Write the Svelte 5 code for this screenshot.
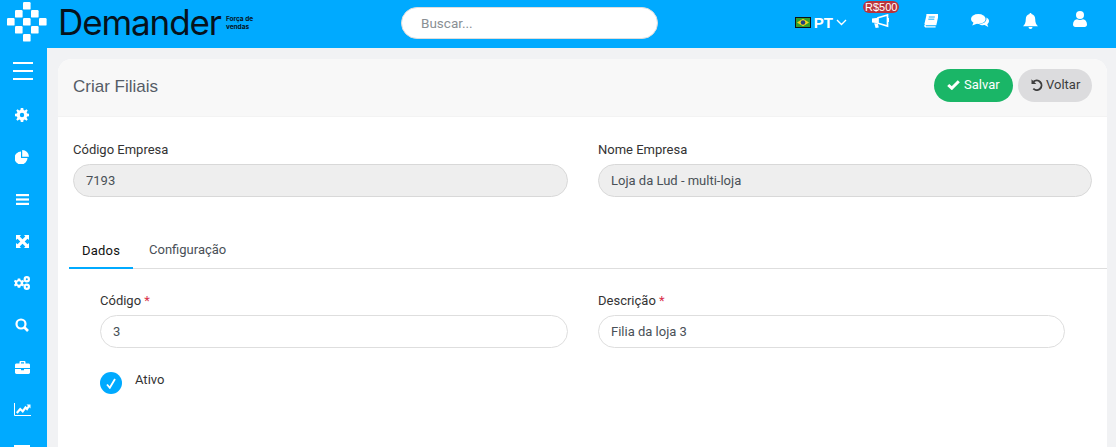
<script>
	let tab = 'Dados';
	const tabs = ['Dados', 'Configuração'];
	// diamond logo squares, col/row on an 8px grid
	const squares = [[2, 0], [1, 1], [3, 1], [0, 2], [2, 2], [4, 2], [1, 3], [3, 3], [2, 4]];
</script>

<div class="app">
	<header class="topbar">
		<div class="brand">
			<svg class="mark" viewBox="0 0 40 40" width="40" height="40" fill="#fff">
				{#each squares as [c, r]}
					<rect x={c * 8} y={r * 8} width="7.6" height="7.6" rx="1.2" />
				{/each}
			</svg>
			<span class="word">Demander</span>
			<span class="tag">Força de<br />vendas</span>
		</div>
		<div class="search"><input placeholder="Buscar..." /></div>
		<nav class="tools">
			<span class="lang">
				<svg width="16" height="11" viewBox="0 0 16 11"><rect width="16" height="11" fill="#111" /><rect x="1" y="1" width="14" height="9" fill="#2f9e2f" /><path d="M8 1.800 14 5.500 8 9.200 2 5.500z" fill="#f2d21b" /><circle cx="8" cy="5.500" r="2.300" fill="#24407f" /></svg>
				<b>PT</b>
				<svg width="11" height="7" viewBox="0 0 11 7" fill="none" stroke="#fff" stroke-width="1.400"><path d="M1 1l4.500 4.500L10 1" /></svg>
			</span>
			<span class="tool">
				<i class="badge">R$500</i>
				<svg width="17" height="14" viewBox="0 0 17 14"><path d="M0 4.500 6 3.800v5.400L0 8.500zM2.200 9.300l3.600.3 1 4-3.200.4z" fill="#fff" /><path d="M6 3.800 15.500 1v11L6 9.200z" fill="none" stroke="#fff" stroke-width="1.700" /><path d="M15 4h2v4h-2z" fill="#fff" /></svg>
			</span>
			<span class="tool">
				<svg width="15" height="14" viewBox="0 0 15 14"><path d="M3.500.5H15l-2.200 10H3.200c-1.600 0-1.800 2.300 0 2.300h9.400" fill="none" stroke="#fff" stroke-width="1.300" /><path d="M3.600.5H15l-2.200 9.500H1.400z" fill="#fff" /><path d="M5.800 3h6M5.300 5.200h6" stroke="#00aaff" stroke-width=".9" /></svg>
			</span>
			<span class="tool">
				<svg width="18" height="14" viewBox="0 0 18 14" fill="#fff"><ellipse cx="7.300" cy="5" rx="7.300" ry="5" /><path d="M2.800 8 1.200 11.500 6.500 9.500z" /><path d="M15.400 3.400C17 4.200 18 5.500 18 7c0 1.300-.7 2.400-1.700 3.200l1 2.800-3.700-1.900c-2 .4-4.200 0-5.600-1.200 3.800.1 8.200-2 7.400-6.500z" /></svg>
			</span>
			<span class="tool">
				<svg width="15" height="16" viewBox="0 0 15 16" fill="#fff"><path d="M7.500 0c.7 0 1 .5 1 1.100 2.300.5 3.700 2.400 3.700 4.900 0 4 1.100 5.700 2.800 7.200H0C1.700 11.700 2.800 10 2.800 6c0-2.500 1.400-4.400 3.700-4.900C6.500.5 6.800 0 7.500 0zM5.500 14h4a2 2 0 0 1-4 0z" /></svg>
			</span>
			<span class="tool me">
				<svg width="14" height="16" viewBox="0 0 14 16" fill="#fff"><circle cx="7" cy="4" r="4" /><path d="M0 13.500C0 10.500 1.800 8.500 4 8.300c1.800 1 4.200 1 6 0 2.200.2 4 2.200 4 5.200 0 1.500-1 2.500-2.400 2.500H2.400C1 16 0 15 0 13.500z" /></svg>
			</span>
		</nav>
	</header>

	<div class="below">
		<aside class="sidebar">
			<span class="burger"><i></i><i></i><i></i></span>
			<ul>
				<li>
					<svg width="14" height="14" viewBox="0 0 14 14" fill="#fff"><path fill-rule="evenodd" d="M5.800 0h2.400l.4 1.900 1.200.5L11.500 1.300l1.200 1.200-1.100 1.700.5 1.200 1.900.4v2.400l-1.900.4-.5 1.200 1.100 1.700-1.200 1.200-1.700-1.100-1.200.5-.4 1.900H5.800l-.4-1.900-1.200-.5-1.700 1.100-1.200-1.200 1.100-1.700-.5-1.200L0 8.200V5.800l1.900-.4.5-1.200L1.300 2.500l1.200-1.200 1.700 1.100 1.200-.5zM7 4.800a2.200 2.200 0 1 0 0 4.400 2.200 2.200 0 0 0 0-4.400z" /></svg>
				</li>
				<li>
					<svg width="14" height="14" viewBox="0 0 14 14" fill="#fff"><path d="M6 1.500V8h6.500A6.500 6.500 0 1 1 6 1.500z" /><path d="M7.200 0A6.800 6.800 0 0 1 14 6.800H7.200z" /></svg>
				</li>
				<li>
					<svg width="13" height="11" viewBox="0 0 13 11" fill="#fff"><rect width="13" height="2.200" /><rect y="4.400" width="13" height="2.200" /><rect y="8.800" width="13" height="2.200" /></svg>
				</li>
				<li>
					<svg width="13" height="13" viewBox="0 0 13 13" fill="#fff"><path d="M0 0h5L3.700 1.500 6.500 4.300 9.300 1.500 8 0h5v5l-1.500-1.300L8.700 6.500l2.800 2.800L13 8v5H8l1.300-1.500-2.800-2.800-2.800 2.800L5 13H0V8l1.500 1.300 2.800-2.800-2.800-2.800L0 5z" /></svg>
				</li>
				<li>
					<svg width="16" height="14" viewBox="0 0 16 14" fill="#fff"><path fill-rule="evenodd" d="M3.800 2.500h2.400l.4 1.400 1.200.5 1.300-.7 1 1.700-1 1v1.400l1 1-1 1.700-1.300-.7-1.200.5-.4 1.400H3.800l-.4-1.400-1.200-.5-1.300.7-.9-1.700 1-1V6.400l-1-1 .9-1.700 1.300.7 1.200-.5zM5 5.200a1.800 1.800 0 1 0 0 3.600 1.800 1.800 0 0 0 0-3.600z" /><path fill-rule="evenodd" d="M12.800 0a3.200 3.200 0 1 1 0 6.400 3.200 3.200 0 0 1 0-6.400zm0 2.200a1 1 0 1 0 0 2 1 1 0 0 0 0-2zM12.800 7.600a3.200 3.200 0 1 1 0 6.400 3.200 3.200 0 0 1 0-6.400zm0 2.200a1 1 0 1 0 0 2 1 1 0 0 0 0-2z" /></svg>
				</li>
				<li>
					<svg width="14" height="14" viewBox="0 0 14 14" fill="none" stroke="#fff"><circle cx="6" cy="6" r="4.500" stroke-width="2.200" /><path d="M9.500 9.500 13 13" stroke-width="2.600" /></svg>
				</li>
				<li>
					<svg width="15" height="13" viewBox="0 0 15 13" fill="#fff"><path fill-rule="evenodd" d="M4.500 2.500V1c0-.5.500-1 1-1h4c.5 0 1 .5 1 1v1.500h3c.8 0 1.500.6 1.500 1.400V7H0V3.900C0 3.100.7 2.500 1.500 2.500zM6 1.300v1.200h3V1.300z" /><path d="M0 8h6v1.300h3V8h6v3.600c0 .8-.7 1.400-1.500 1.400h-12C.7 13 0 12.400 0 11.600z" /></svg>
				</li>
				<li>
					<svg width="17" height="13" viewBox="0 0 17 13" fill="none" stroke="#fff"><path d="M.5 0v12.500H17" /><path d="M2.800 10 6.200 6l2.500 2.300L11.500 4.500 13 6l2-3" stroke-width="2.200" /><path d="M12.500 1.500H16.500V5.500z" fill="#fff" stroke="none" /></svg>
				</li>
			</ul>
			<span class="cut"></span>
		</aside>

		<main class="page">
			<section class="card">
				<div class="card-head">
					<h1>Criar Filiais</h1>
					<div class="actions">
						<button class="btn save">
							<svg width="13" height="10" viewBox="0 0 13 10" fill="none" stroke="#fff" stroke-width="3"><path d="M1.200 5 4.800 8.200 11.800 1.200" /></svg>
							Salvar
						</button>
						<button class="btn back">
							<svg width="12" height="12" viewBox="0 0 12 12" fill="none" stroke="#3d3d3d" stroke-width="1.900"><path d="M2.400 2.800A4.800 4.800 0 1 1 2.300 9.700" /><path d="M.5 .3v4.800h4.800z" fill="#3d3d3d" stroke="none" /></svg>
							Voltar
						</button>
					</div>
				</div>
				<div class="card-body">
					<div class="row">
						<label class="field">
							<span>Código Empresa</span>
							<input class="locked" value="7193" readonly />
						</label>
						<label class="field">
							<span>Nome Empresa</span>
							<input class="locked" value="Loja da Lud - multi-loja" readonly />
						</label>
					</div>

					<div class="tabs">
						{#each tabs as t}
							<button class="tab" class:active={tab === t} onclick={() => (tab = t)}>{t}</button>
						{/each}
					</div>

					<div class="pane">
						<div class="row">
							<label class="field">
								<span>Código <em>*</em></span>
								<input value="3" />
							</label>
							<label class="field">
								<span>Descrição <em>*</em></span>
								<input value="Filia da loja 3" />
							</label>
						</div>
						<div class="check">
							<span class="tick">
								<svg width="10" height="11" viewBox="0 0 10 11" fill="none" stroke="#fff" stroke-width="1.800"><path d="M1 6.500 3.800 9.800 9 1" /></svg>
							</span>
							<span>Ativo</span>
						</div>
					</div>
				</div>
			</section>
		</main>
	</div>
</div>

<style>
	:global(body) {
		margin: 0;
		overflow: hidden;
		font-family: Roboto, "Liberation Sans", sans-serif;
	}
	.app {
		height: 447px;
		overflow: hidden;
		background: #f1f2f4;
	}
	.topbar {
		height: 48px;
		background: #00aaff;
		display: flex;
		align-items: center;
	}
	.brand {
		width: 401px;
		flex: none;
		display: flex;
		align-items: center;
		padding-left: 7px;
		box-sizing: border-box;
	}
	.mark {
		flex: none;
		margin-top: -4px;
	}
	.word {
		font-family: Inter, sans-serif;
		font-size: 35px;
		letter-spacing: -1.100px;
		color: #06121c;
		margin-left: 11px;
		margin-top: -5px;
	}
	.tag {
		font-family: Inter, sans-serif;
		font-size: 6.500px;
		font-weight: 700;
		line-height: 8px;
		color: #06121c;
		margin-left: 5px;
		margin-top: -2px;
	}
	.search {
		flex: none;
		margin-top: -3px;
	}
	.search input {
		width: 257px;
		height: 32px;
		box-sizing: border-box;
		border: 1px solid #ddd;
		border-radius: 16px;
		padding: 0 19px;
		font: 13.500px Roboto, sans-serif;
		background: #fff;
		outline: none;
	}
	.search input::placeholder {
		color: #8a8f94;
		opacity: 1;
	}
	.tools {
		margin-left: auto;
		display: flex;
		align-items: center;
		height: 100%;
		padding-right: 11px;
		margin-top: -7px;
	}
	.lang {
		display: flex;
		align-items: center;
		gap: 3px;
		color: #fff;
		margin-right: 8px;
		margin-top: 3px;
	}
	.lang b {
		font: 700 15px "Liberation Sans", sans-serif;
	}
	.tool {
		width: 50px;
		display: flex;
		justify-content: center;
		position: relative;
	}
	.tool.me {
		margin-top: -3px;
	}
	.badge {
		position: absolute;
		top: -13px;
		left: 8px;
		background: #b9343c;
		color: #fff;
		border-radius: 7px;
		font: normal 11px/12px "Liberation Sans", sans-serif;
		padding: 0 2px;
	}
	.below {
		display: flex;
		height: 399px;
	}
	.sidebar {
		width: 47px;
		flex: none;
		background: #00aaff;
		display: flex;
		flex-direction: column;
		align-items: center;
		overflow: hidden;
	}
	.burger {
		display: flex;
		flex-direction: column;
		gap: 6px;
		margin-top: 14px;
		margin-left: -2px;
	}
	.burger i {
		display: block;
		width: 20px;
		height: 2px;
		background: #fff;
	}
	.sidebar ul {
		list-style: none;
		margin: 14px 0 0 -3px;
		padding: 0;
	}
	.sidebar li {
		height: 42px;
		display: flex;
		justify-content: center;
		align-items: center;
	}
	.cut {
		display: block;
		width: 16px;
		height: 4px;
		background: #fff;
		margin: 15px 0 0 -3px;
		flex: none;
	}
	.page {
		flex: 1;
		padding: 11px 9px 0 11px;
		min-width: 0;
	}
	.card {
		background: #fff;
		border-radius: 14px 14px 0 0;
		height: 100%;
		overflow: hidden;
		color: #333;
	}
	.card-head {
		height: 58px;
		background: #f8f8f8;
		border-bottom: 1px solid #f3f3f3;
		box-sizing: border-box;
		display: flex;
		align-items: center;
		justify-content: space-between;
		padding: 0 15px;
	}
	h1 {
		margin: -2px 0 0;
		font: 400 17px "Liberation Sans", sans-serif;
		color: #555c66;
	}
	.actions {
		display: flex;
		gap: 5px;
		margin-top: -4px;
	}
	.btn {
		height: 33px;
		border: 0;
		border-radius: 17px;
		font: 13px Roboto, sans-serif;
		padding: 0 0 2px 13px;
		display: flex;
		align-items: center;
		gap: 4px;
	}
	.btn svg {
		flex: none;
	}
	.save {
		width: 79px;
		background: #1ab667;
		color: #fff;
	}
	.back {
		width: 74px;
		background: #dcdcde;
		color: #3d3d3d;
		gap: 3px;
	}
	.card-body {
		padding: 24px 15px 0;
	}
	.row {
		display: grid;
		grid-template-columns: 495px 494px;
		gap: 30px;
	}
	.field {
		display: flex;
		flex-direction: column;
		font-size: 13px;
		color: #333;
	}
	.field span {
		line-height: 16px;
		padding-top: 1px;
		margin-bottom: 6px;
	}
	em {
		color: #d9304a;
		font-style: normal;
	}
	.field input {
		height: 33px;
		box-sizing: border-box;
		border: 1px solid #dedede;
		border-radius: 17px;
		padding: 0 12px;
		font: 13px Roboto, sans-serif;
		color: #495057;
		background: #fff;
		outline: none;
		width: 100%;
	}
	.field input.locked {
		background: #eeeeee;
		border-color: #d8d8d8;
	}
	.tabs {
		display: flex;
		margin: 37px 0 0 -4px;
		width: 1038px;
		border-bottom: 1px solid #dedede;
		height: 34px;
	}
	.tab {
		border: 0;
		background: none;
		padding: 0 16px 3px;
		height: 34px;
		font: 13px Roboto, sans-serif;
		color: #495057;
	}
	.tab.active {
		color: #111;
		border-bottom: 2px solid #00aaff;
		padding: 0 13px 1px;
		width: 64px;
		letter-spacing: .2px;
		height: 35px;
	}
	.pane {
		padding: 23px 0 0 27px;
	}
	.pane .row {
		grid-template-columns: 468px 467px;
	}
	.check {
		display: flex;
		align-items: flex-start;
		gap: 13px;
		margin-top: 24px;
		font-size: 13px;
		color: #333;
	}
	.tick {
		width: 22px;
		height: 22px;
		border-radius: 50%;
		background: #00aaff;
		display: flex;
		align-items: center;
		justify-content: center;
	}
</style>
